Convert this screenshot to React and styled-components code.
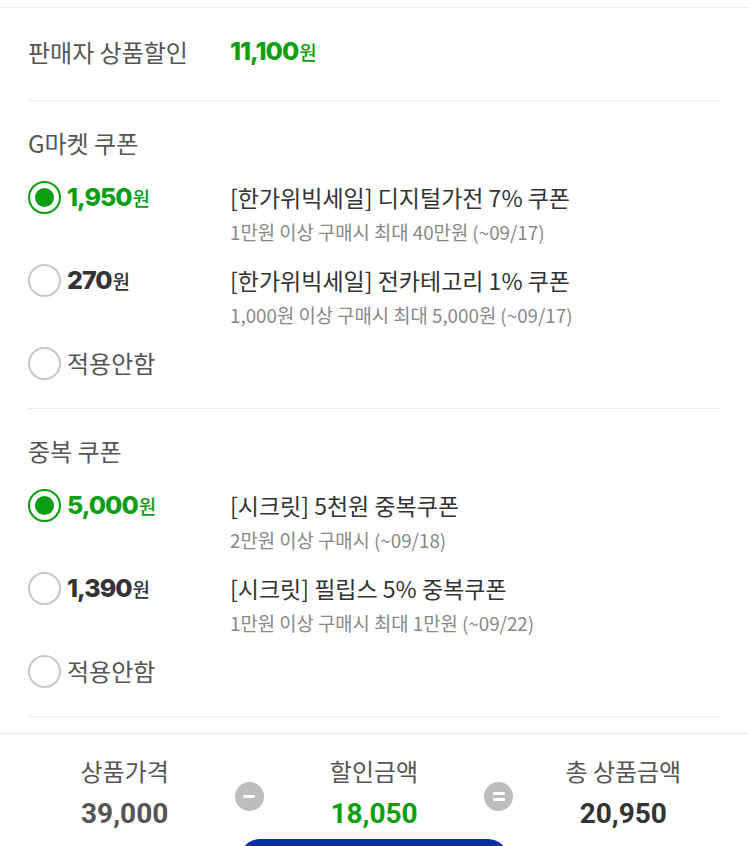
import React from "react";
import styled, { createGlobalStyle } from "styled-components";

const GREEN = "#0a9f12";

const groups = [
  {
    title: "G마켓 쿠폰",
    items: [
      { amount: "1,950", name: "[한가위빅세일] 디지털가전 7% 쿠폰", desc: "1만원 이상 구매시 최대 40만원 (~09/17)", checked: true },
      { amount: "270", name: "[한가위빅세일] 전카테고리 1% 쿠폰", desc: "1,000원 이상 구매시 최대 5,000원 (~09/17)" },
    ],
  },
  {
    title: "중복 쿠폰",
    items: [
      { amount: "5,000", name: "[시크릿] 5천원 중복쿠폰", desc: "2만원 이상 구매시 (~09/18)", checked: true },
      { amount: "1,390", name: "[시크릿] 필립스 5% 중복쿠폰", desc: "1만원 이상 구매시 최대 1만원 (~09/22)" },
    ],
  },
];

const summary = [
  { label: "상품가격", value: "39,000", tone: "#555" },
  { op: "minus" },
  { label: "할인금액", value: "18,050", tone: GREEN },
  { op: "equal" },
  { label: "총 상품금액", value: "20,950", tone: "#333" },
];

const App = () => {
  return (
    <>
      <GlobalStyle />
      <Page>
        <TopBar />
        <Content>
          <SellerSection>
            <Label>판매자 상품할인</Label>
            <Amount color={GREEN}>
              11,100<Won>원</Won>
            </Amount>
          </SellerSection>

          {groups.map((group, gi) => (
            <Section key={gi}>
              <Label>{group.title}</Label>
              <OptionList>
                {group.items.map((item, i) => (
                  <Option key={i}>
                    <OptionLeft>
                      <Radio checked={item.checked} />
                      <Amount color={item.checked ? GREEN : "#333"}>
                        {item.amount}
                        <Won>원</Won>
                      </Amount>
                    </OptionLeft>
                    <OptionBody>
                      <CouponName>{item.name}</CouponName>
                      <CouponDesc>{item.desc}</CouponDesc>
                    </OptionBody>
                  </Option>
                ))}
                <Option>
                  <OptionLeft>
                    <Radio />
                    <NoneText>적용안함</NoneText>
                  </OptionLeft>
                </Option>
              </OptionList>
            </Section>
          ))}
        </Content>

        <Footer>
          <SummaryGrid>
            {summary.map((s, i) =>
              s.op ? (
                <Operator key={i}>
                  <OpBar />
                  {s.op === "equal" && <OpBar />}
                </Operator>
              ) : (
                <SummaryCol key={i}>
                  <SummaryLabel>{s.label}</SummaryLabel>
                  <SummaryValue color={s.tone}>{s.value}</SummaryValue>
                </SummaryCol>
              )
            )}
          </SummaryGrid>
          <ApplyButton aria-label="apply" />
        </Footer>
      </Page>
    </>
  );
};

export default App;

const GlobalStyle = createGlobalStyle`
  html, body {
    margin: 0;
    padding: 0;
    background: #fff;
    overflow: hidden;
  }
  body {
    font-family: "Noto Sans CJK KR", "Noto Sans", sans-serif;
    color: #333;
  }
  * {
    box-sizing: border-box;
  }
`;

const Page = styled.div`
  width: 748px;
  height: 846px;
  overflow: hidden;
`;

const TopBar = styled.div`
  height: 8px;
  border-bottom: 1px solid #eeeeee;
`;

const Content = styled.div`
  padding: 0 28px;
`;

const Section = styled.section`
  padding: 27px 0 30px;
  border-bottom: 1px solid #ebebeb;
`;

const SellerSection = styled(Section)`
  display: flex;
  align-items: center;
  padding: 28px 0 33px;
`;

const Label = styled.div`
  width: 202px;
  font-size: 24px;
  line-height: 30px;
  color: #555;
  white-space: nowrap;
`;

const Amount = styled.span`
  font-family: Inter, Roboto, sans-serif;
  font-weight: 800;
  font-size: 25px;
  line-height: 30px;
  letter-spacing: -1px;
  color: ${(p) => p.color};
  white-space: nowrap;
`;

const Won = styled.span`
  font-family: "Noto Sans CJK KR", sans-serif;
  font-weight: 500;
  font-size: 19px;
  letter-spacing: 0;
  margin-left: 1px;
`;

const OptionList = styled.div`
  display: flex;
  flex-direction: column;
  gap: 20px;
  margin-top: 24px;
`;

const Option = styled.div`
  display: flex;
  align-items: flex-start;
`;

const OptionLeft = styled.div`
  width: 202px;
  height: 30px;
  display: flex;
  align-items: center;
  gap: 6px;
  flex-shrink: 0;
`;

const Radio = styled.span`
  width: 33px;
  height: 33px;
  border-radius: 50%;
  border: 2px solid ${(p) => (p.checked ? GREEN : "#c8c8c8")};
  display: flex;
  align-items: center;
  justify-content: center;
  flex-shrink: 0;

  &::after {
    content: "";
    display: ${(p) => (p.checked ? "block" : "none")};
    width: 19px;
    height: 19px;
    border-radius: 50%;
    background: ${GREEN};
  }
`;

const NoneText = styled.span`
  font-size: 24px;
  line-height: 30px;
  color: #555;
`;

const OptionBody = styled.div`
  display: flex;
  flex-direction: column;
`;

const CouponName = styled.div`
  font-size: 23px;
  line-height: 30px;
  color: #333;
  white-space: nowrap;
`;

const CouponDesc = styled.div`
  margin-top: 7px;
  font-size: 18.8px;
  line-height: 26px;
  color: #888;
  white-space: nowrap;
`;

const Footer = styled.footer`
  margin-top: 16px;
  border-top: 1px solid #ececec;
  box-shadow: 0 -2px 4px rgba(0, 0, 0, 0.04);
  background: #fff;
  padding-top: 23px;
  display: flex;
  flex-direction: column;
  align-items: center;
`;

const SummaryGrid = styled.div`
  width: 100%;
  display: grid;
  grid-template-columns: 1fr 0 1fr 0 1fr;
  align-items: center;
`;

const SummaryCol = styled.div`
  display: flex;
  flex-direction: column;
  align-items: center;
`;

const SummaryLabel = styled.div`
  font-size: 24px;
  line-height: 28px;
  color: #555;
`;

const SummaryValue = styled.div`
  margin-top: 13px;
  font-family: Roboto, Inter, sans-serif;
  font-weight: 700;
  font-size: 28px;
  line-height: 32px;
  color: ${(p) => p.color};
`;

const Operator = styled.div`
  width: 29px;
  height: 29px;
  margin: 6px -14.5px 0;
  border-radius: 50%;
  background: #bdbdbd;
  display: flex;
  flex-direction: column;
  align-items: center;
  justify-content: center;
  gap: 3px;
`;

const OpBar = styled.span`
  width: 12px;
  height: 3px;
  border-radius: 1px;
  background: #fff;
`;

const ApplyButton = styled.button`
  margin-top: 9px;
  width: 268px;
  height: 56px;
  border: none;
  border-radius: 20px;
  background: #0a2fa2;
  flex-shrink: 0;
`;
